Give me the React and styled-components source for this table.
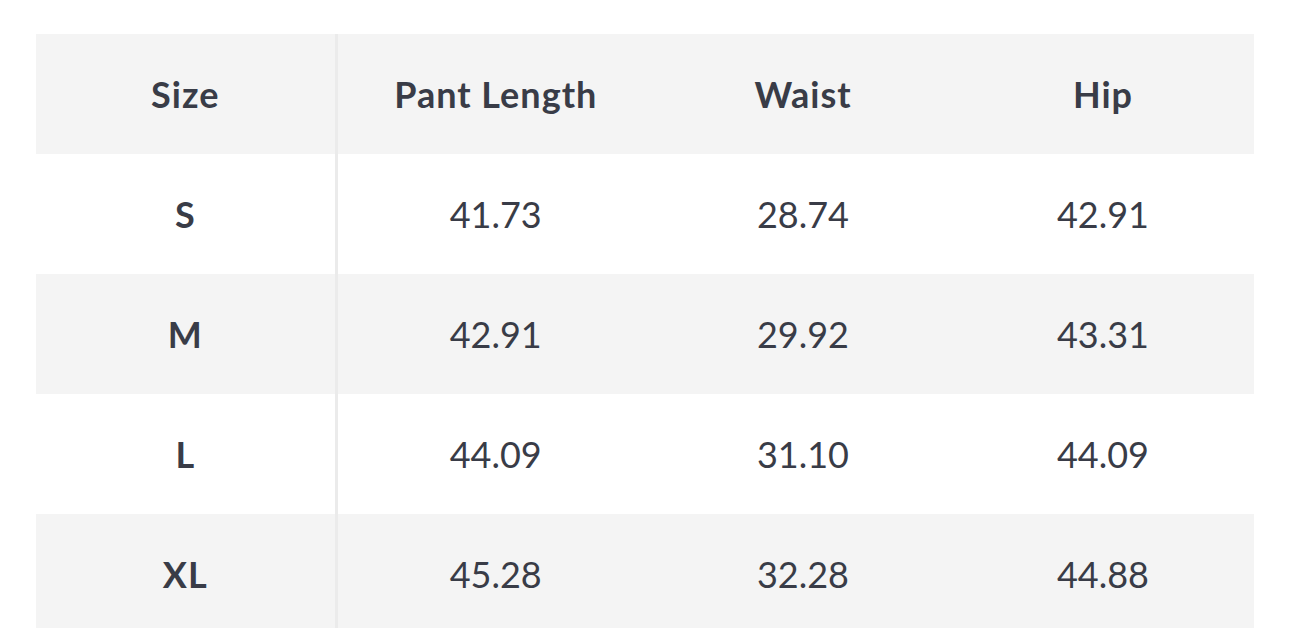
import React from "react";
import styled, { createGlobalStyle } from "styled-components";

const Global = createGlobalStyle`
  html, body { margin: 0; padding: 0; background: #ffffff; }
  body { font-family: Lato, "Open Sans", sans-serif; }
`;

const Wrap = styled.div`
  padding: 34px 36px 0 36px;
`;

const Table = styled.table`
  width: 1218px;
  border-collapse: collapse;
  table-layout: fixed;
  color: #393c47;
`;

const Row = styled.tr`
  background: ${(p) => (p.$shaded ? "#f4f4f4" : "#ffffff")};
`;

const Cell = styled.td`
  height: 120px;
  padding: 0;
  text-align: center;
  vertical-align: middle;
  font-size: 36px;
  font-weight: ${(p) => (p.$head ? 700 : 400)};
  letter-spacing: ${(p) => (p.$head ? "1px" : "0")};
  border-right: ${(p) => (p.$first ? "3px solid #ebebeb" : "none")};
  line-height: 1;
`;

const headers = ["Size", "Pant Length", "Waist", "Hip"];
const rows = [
  ["S", "41.73", "28.74", "42.91"],
  ["M", "42.91", "29.92", "43.31"],
  ["L", "44.09", "31.10", "44.09"],
  ["XL", "45.28", "32.28", "44.88"],
];
const widths = [300, 318, 298, 302];

export default function App() {
  return (
    <Wrap>
      <Global />
      <Table>
        <colgroup>
          {widths.map((w, i) => (
            <col key={i} style={{ width: w }} />
          ))}
        </colgroup>
        <thead>
          <Row $shaded>
            {headers.map((h, i) => (
              <Cell as="th" key={h} $head $first={i === 0}>
                {h}
              </Cell>
            ))}
          </Row>
        </thead>
        <tbody>
          {rows.map((r, ri) => (
            <Row key={r[0]} $shaded={ri % 2 === 1}>
              {r.map((v, i) => (
                <Cell key={i} $head={i === 0} $first={i === 0}>
                  {v}
                </Cell>
              ))}
            </Row>
          ))}
        </tbody>
      </Table>
    </Wrap>
  );
}
